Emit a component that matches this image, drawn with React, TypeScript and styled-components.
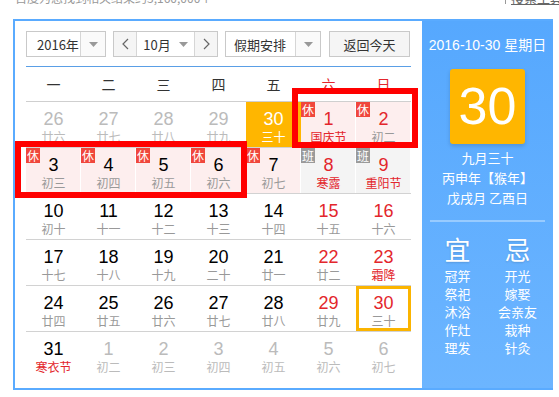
import React from "react";
import styled, { createGlobalStyle } from "styled-components";

const CJK = `"Noto Sans CJK SC", "Liberation Sans", sans-serif`;
const NUM = `"Liberation Sans", "Noto Sans CJK SC", sans-serif`;
const RED = "#e3262c";

const GlobalStyle = createGlobalStyle`
  html, body {
    margin: 0;
    padding: 0;
    background: #fff;
  }
  body {
    font-family: ${NUM};
    overflow: hidden;
  }
`;

interface Day {
  n: number;
  lunar: string;
  other?: boolean;
  red?: boolean;
  fest?: boolean;
  tag?: "休" | "班";
  selected?: boolean;
  today?: boolean;
}

const weeks: Day[][] = [
  [
    { n: 26, lunar: "廿六", other: true },
    { n: 27, lunar: "廿七", other: true },
    { n: 28, lunar: "廿八", other: true },
    { n: 29, lunar: "廿九", other: true },
    { n: 30, lunar: "三十", other: true, selected: true },
    { n: 1, lunar: "国庆节", red: true, fest: true, tag: "休" },
    { n: 2, lunar: "初二", red: true, tag: "休" },
  ],
  [
    { n: 3, lunar: "初三", tag: "休" },
    { n: 4, lunar: "初四", tag: "休" },
    { n: 5, lunar: "初五", tag: "休" },
    { n: 6, lunar: "初六", tag: "休" },
    { n: 7, lunar: "初七", tag: "休" },
    { n: 8, lunar: "寒露", red: true, fest: true, tag: "班" },
    { n: 9, lunar: "重阳节", red: true, fest: true, tag: "班" },
  ],
  [
    { n: 10, lunar: "初十" },
    { n: 11, lunar: "十一" },
    { n: 12, lunar: "十二" },
    { n: 13, lunar: "十三" },
    { n: 14, lunar: "十四" },
    { n: 15, lunar: "十五", red: true },
    { n: 16, lunar: "十六", red: true },
  ],
  [
    { n: 17, lunar: "十七" },
    { n: 18, lunar: "十八" },
    { n: 19, lunar: "十九" },
    { n: 20, lunar: "二十" },
    { n: 21, lunar: "廿一" },
    { n: 22, lunar: "廿二", red: true },
    { n: 23, lunar: "霜降", red: true, fest: true },
  ],
  [
    { n: 24, lunar: "廿四" },
    { n: 25, lunar: "廿五" },
    { n: 26, lunar: "廿六" },
    { n: 27, lunar: "廿七" },
    { n: 28, lunar: "廿八" },
    { n: 29, lunar: "廿九", red: true },
    { n: 30, lunar: "三十", red: true, today: true },
  ],
  [
    { n: 31, lunar: "寒衣节", fest: true },
    { n: 1, lunar: "初二", other: true },
    { n: 2, lunar: "初三", other: true },
    { n: 3, lunar: "初四", other: true },
    { n: 4, lunar: "初五", other: true },
    { n: 5, lunar: "初六", other: true },
    { n: 6, lunar: "初七", other: true },
  ],
];

const weekNames = ["一", "二", "三", "四", "五", "六", "日"];
const goodList = ["冠笄", "祭祀", "沐浴", "作灶", "理发"];
const badList = ["开光", "嫁娶", "会亲友", "栽种", "针灸"];

function Caret() {
  return (
    <svg width="9" height="5" viewBox="0 0 9 5">
      <polygon points="0,0 9,0 4.5,5" fill="#999" />
    </svg>
  );
}

function Chevron({ dir }: { dir: "left" | "right" }) {
  return (
    <svg width="7" height="12" viewBox="0 0 7 12">
      <polyline
        points={dir === "left" ? "6,1 1,6 6,11" : "1,1 6,6 1,11"}
        fill="none"
        stroke="#666"
        strokeWidth="1.2"
      />
    </svg>
  );
}

function FilterIcon() {
  return (
    <svg width="7" height="8" viewBox="0 0 7 8">
      <polygon points="0,0 7,0 4,4 4,8 3,8 3,4" fill="#999" />
    </svg>
  );
}

function App() {
  return (
    <Page>
      <GlobalStyle />
      <TopBar>
        <ResultCount>百度为您找到相关结果约3,160,000个</ResultCount>
        <SearchTools>
          <FilterIcon />
          <span>搜索工具</span>
        </SearchTools>
      </TopBar>

      <Calendar>
        <MainPane>
          <Toolbar>
            <Select $w={80}>
              <SelectText $pad={10}>2016年</SelectText>
              <SelectArrow>
                <Caret />
              </SelectArrow>
            </Select>
            <MonthGroup>
              <NavButton>
                <Chevron dir="left" />
              </NavButton>
              <MonthText>
                10月
                <Caret />
              </MonthText>
              <NavButton>
                <Chevron dir="right" />
              </NavButton>
            </MonthGroup>
            <Select $w={96}>
              <SelectText $pad={8}>假期安排</SelectText>
              <SelectArrow>
                <Caret />
              </SelectArrow>
            </Select>
            <TodayButton>返回今天</TodayButton>
          </Toolbar>

          <BlueRule />

          <WeekHeader>
            {weekNames.map((w, i) => (
              <WeekName key={w} $red={i >= 5}>
                {w}
              </WeekName>
            ))}
          </WeekHeader>

          {weeks.map((week, wi) => (
            <WeekRow key={wi} $last={wi === weeks.length - 1}>
              {week.map((d, di) => (
                <Cell
                  key={di}
                  $bg={
                    d.selected
                      ? "selected"
                      : d.tag === "休"
                      ? "rest"
                      : d.tag === "班"
                      ? "work"
                      : "none"
                  }
                  $today={!!d.today}
                >
                  {d.tag && <Tag $work={d.tag === "班"}>{d.tag}</Tag>}
                  <DayNum
                    $color={
                      d.selected
                        ? "#fff"
                        : d.other
                        ? "#bbb"
                        : d.red
                        ? RED
                        : "#000"
                    }
                  >
                    {d.n}
                  </DayNum>
                  <Lunar
                    $color={
                      d.selected
                        ? "#fff"
                        : d.fest
                        ? RED
                        : d.other
                        ? "#bbb"
                        : "#999"
                    }
                  >
                    {d.lunar}
                  </Lunar>
                </Cell>
              ))}
            </WeekRow>
          ))}
        </MainPane>

        <SidePane>
          <FullDate>2016-10-30 星期日</FullDate>
          <BigDay>30</BigDay>
          <LunarInfo>
            <div>九月三十</div>
            <div>丙申年【猴年】</div>
            <div>戊戌月 乙酉日</div>
          </LunarInfo>
          <SideRule />
          <Almanac>
            <AlmanacCol>
              <AlmanacTitle>宜</AlmanacTitle>
              {goodList.map((t) => (
                <AlmanacItem key={t}>{t}</AlmanacItem>
              ))}
            </AlmanacCol>
            <AlmanacCol>
              <AlmanacTitle>忌</AlmanacTitle>
              {badList.map((t) => (
                <AlmanacItem key={t}>{t}</AlmanacItem>
              ))}
            </AlmanacCol>
          </Almanac>
        </SidePane>

        <Mark $x={277} $y={67} $w={126} $h={60} />
        <Mark $x={0} $y={120} $w={232} $h={57} />
      </Calendar>
    </Page>
  );
}

const Page = styled.div`
  width: 559px;
  height: 397px;
  padding-left: 13px;
  box-sizing: border-box;
`;

const TopBar = styled.div`
  display: flex;
  justify-content: space-between;
  align-items: flex-start;
  height: 19px;
  padding-left: 2px;
  overflow: hidden;
`;

const ResultCount = styled.div`
  margin-top: -9px;
  font-family: ${CJK};
  font-size: 12px;
  line-height: 13px;
  color: #999;
`;

const SearchTools = styled.div`
  display: flex;
  align-items: flex-end;
  gap: 2px;
  margin-top: -9px;
  margin-right: -4px;
  font-family: ${CJK};
  font-size: 13px;
  line-height: 13px;
  color: #666;

  span {
    text-decoration: underline;
  }
`;

const Calendar = styled.div`
  position: relative;
  display: flex;
  width: 540px;
  height: 371px;
  box-sizing: border-box;
  border: 2px solid #5aabff;
  border-right: none;
`;

const MainPane = styled.div`
  width: 407px;
  padding: 10px 11px 0;
  box-sizing: border-box;
  background: #fff;
`;

const Toolbar = styled.div`
  display: flex;
  height: 26px;
  gap: 7px;
`;

const Select = styled.div<{ $w: number }>`
  display: flex;
  width: ${(p) => p.$w}px;
  height: 26px;
  box-sizing: border-box;
  border: 1px solid #c9c9c9;
  background: #fff;
`;

const SelectText = styled.div<{ $pad: number }>`
  flex: 1;
  display: flex;
  align-items: center;
  padding-left: ${(p) => p.$pad}px;
  font-family: ${CJK};
  font-size: 13px;
  color: #333;
`;

const SelectArrow = styled.div`
  width: 24px;
  display: flex;
  align-items: center;
  justify-content: center;
  border-left: 1px solid #d6d6d6;
  background: #fafafa;
`;

const MonthGroup = styled.div`
  display: flex;
  width: 105px;
  height: 26px;
  box-sizing: border-box;
  border: 1px solid #c9c9c9;
`;

const NavButton = styled.div`
  width: 22px;
  display: flex;
  align-items: center;
  justify-content: center;
  background: #f5f5f5;
`;

const MonthText = styled.div`
  flex: 1;
  display: flex;
  align-items: center;
  justify-content: center;
  gap: 8px;
  border-left: 1px solid #d6d6d6;
  border-right: 1px solid #d6d6d6;
  background: #fff;
  font-family: ${CJK};
  font-size: 13px;
  color: #333;
`;

const TodayButton = styled.div`
  width: 81px;
  height: 26px;
  margin-left: 1px;
  box-sizing: border-box;
  border: 1px solid #c9c9c9;
  background: #f5f5f5;
  display: flex;
  align-items: center;
  justify-content: center;
  font-family: ${CJK};
  font-size: 13px;
  color: #333;
`;

const BlueRule = styled.div`
  height: 1px;
  margin-top: 9px;
  background: #5a9fe6;
`;

const WeekHeader = styled.div`
  display: grid;
  grid-template-columns: repeat(7, 55px);
  height: 34px;
  border-bottom: 1px solid #cfcfcf;
`;

const WeekName = styled.div<{ $red: boolean }>`
  display: flex;
  align-items: center;
  justify-content: center;
  font-family: ${CJK};
  font-size: 14px;
  color: ${(p) => (p.$red ? RED : "#333")};
`;

const WeekRow = styled.div<{ $last: boolean }>`
  display: grid;
  grid-template-columns: repeat(7, 55px);
  height: 46px;
  box-sizing: border-box;
  border-bottom: ${(p) => (p.$last ? "none" : "1px solid #d2d2d2")};
`;

const cellBg = {
  none: "transparent",
  rest: "#fdeeee",
  work: "#f4f4f4",
  selected: "#ffb600",
};

const Cell = styled.div<{ $bg: keyof typeof cellBg; $today: boolean }>`
  position: relative;
  display: flex;
  flex-direction: column;
  align-items: center;
  padding-top: 8px;
  box-sizing: border-box;
  background: ${(p) => cellBg[p.$bg]};
  box-shadow: ${(p) =>
    p.$today
      ? "inset 0 0 0 3px #fbb400"
      : p.$bg === "rest" || p.$bg === "work"
      ? "inset -1px 0 0 #fff"
      : "none"};
`;

const Tag = styled.div<{ $work: boolean }>`
  position: absolute;
  top: 0;
  left: 0;
  width: 14px;
  height: 15px;
  background: ${(p) => (p.$work ? "#9a9a9a" : "#f0473c")};
  color: #fff;
  font-family: ${CJK};
  font-size: 12px;
  line-height: 15px;
  text-align: center;
`;

const DayNum = styled.div<{ $color: string }>`
  font-family: ${NUM};
  font-size: 18px;
  line-height: 18px;
  color: ${(p) => p.$color};
`;

const Lunar = styled.div<{ $color: string }>`
  font-family: ${CJK};
  font-size: 12px;
  line-height: 17px;
  color: ${(p) => p.$color};
`;

const SidePane = styled.div`
  flex: 1;
  display: flex;
  flex-direction: column;
  align-items: center;
  padding-top: 14px;
  background: linear-gradient(#56a8fe, #6cb5ff);
  color: #fff;
  font-family: ${CJK};
`;

const FullDate = styled.div`
  font-family: ${NUM};
  font-size: 14px;
  line-height: 20px;
`;

const BigDay = styled.div`
  width: 75px;
  height: 75px;
  margin-top: 14px;
  border-radius: 3px;
  background: #ffb600;
  box-shadow: 0 2px 4px rgba(0, 0, 0, 0.15);
  font-family: ${NUM};
  font-size: 52px;
  line-height: 75px;
  text-align: center;
`;

const LunarInfo = styled.div`
  margin-top: 4px;
  font-size: 13px;
  line-height: 20px;
  text-align: center;
`;

const SideRule = styled.div`
  width: 115px;
  height: 2px;
  margin-top: 12px;
  background: rgba(255, 255, 255, 0.35);
`;

const Almanac = styled.div`
  display: flex;
  gap: 20px;
  margin-top: 11px;
`;

const AlmanacCol = styled.div`
  width: 40px;
  display: flex;
  flex-direction: column;
  align-items: center;
`;

const AlmanacTitle = styled.div`
  font-size: 26px;
  line-height: 32px;
  margin-bottom: 2px;
  text-shadow: 0 1px 2px rgba(0, 0, 0, 0.15);
`;

const AlmanacItem = styled.div`
  font-size: 13px;
  line-height: 18px;
  white-space: nowrap;
`;

const Mark = styled.div<{ $x: number; $y: number; $w: number; $h: number }>`
  position: absolute;
  left: ${(p) => p.$x}px;
  top: ${(p) => p.$y}px;
  width: ${(p) => p.$w}px;
  height: ${(p) => p.$h}px;
  box-sizing: border-box;
  border: 6px solid #ff0000;
  pointer-events: none;
`;

export default App;
